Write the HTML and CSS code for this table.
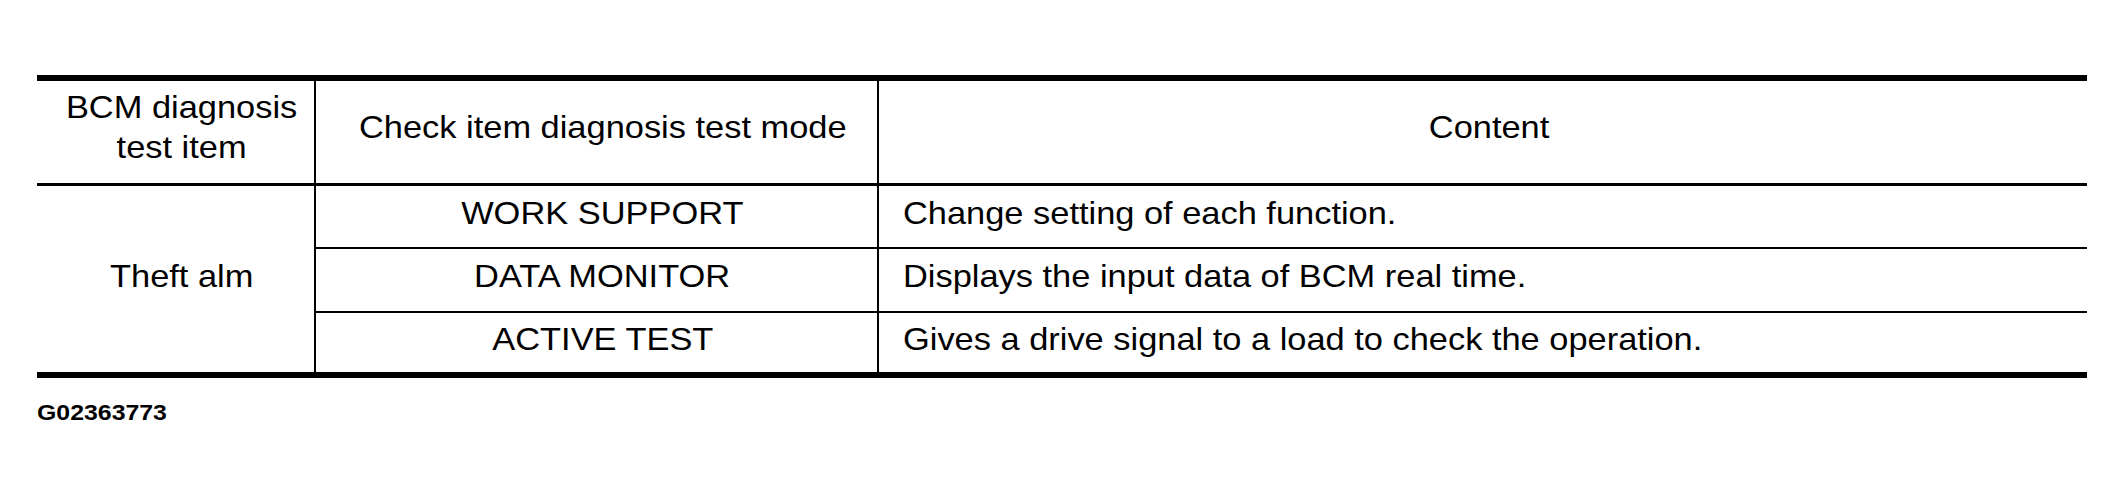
FILE: index.html
```html
<!DOCTYPE html>
<html lang="en">
<head>
<meta charset="utf-8">
<title>BCM diagnosis test item</title>
<link rel="stylesheet" href="styles.css">
</head>
<body>
<div class="page">
  <table class="diag">
    <colgroup>
      <col class="c1">
      <col class="c2">
      <col class="c3">
    </colgroup>
    <thead>
      <tr class="head">
        <th><span class="t">BCM diagnosis<br>test item</span></th>
        <th class="div"><span class="t">Check item diagnosis test mode</span></th>
        <th class="div"><span class="t">Content</span></th>
      </tr>
    </thead>
    <tbody>
      <tr class="r1">
        <td class="item" rowspan="3"><span class="t">Theft alm</span></td>
        <td class="div mode line"><span class="t">WORK SUPPORT</span></td>
        <td class="div desc line"><span class="t tl">Change setting of each function.</span></td>
      </tr>
      <tr class="r2">
        <td class="div mode line"><span class="t">DATA MONITOR</span></td>
        <td class="div desc line"><span class="t tl">Displays the input data of BCM real time.</span></td>
      </tr>
      <tr class="r3">
        <td class="div mode"><span class="t">ACTIVE TEST</span></td>
        <td class="div desc"><span class="t tl">Gives a drive signal to a load to check the operation.</span></td>
      </tr>
    </tbody>
  </table>
  <div class="caption"><span class="t tl">G02363773</span></div>
</div>
</body>
</html>
```
FILE: styles.css
```css
html, body {
  margin: 0;
  padding: 0;
  background: #fff;
}
body {
  font-family: "Liberation Sans", Arial, sans-serif;
  color: #000;
}
.page {
  padding: 75px 0 0 37px;
}
.diag {
  width: 2050px;
  table-layout: fixed;
  border-collapse: separate;
  border-spacing: 0;
  border-top: 6px solid #000;
  border-bottom: 6px solid #000;
  font-size: 32px;
  line-height: 40px;
}
.c1 { width: 277px; }
.c2 { width: 563px; }
.c3 { width: 1210px; }
.diag th,
.diag td {
  box-sizing: border-box;
  padding: 0;
  font-weight: normal;
  text-align: center;
  vertical-align: middle;
}
.diag th {
  height: 105px;
  border-bottom: 3px solid #000;
  padding: 0 0 11px 12px;
}
.div {
  border-left: 2px solid #000;
}
.line {
  border-bottom: 2px solid #000;
}
.r1 td.mode, .r1 td.desc { height: 63px; }
.r2 td { height: 64px; }
.r3 td { height: 59px; }
.diag td.mode,
.diag td.desc {
  padding: 0 0 8px 12px;
}
.diag td.desc {
  text-align: left;
  padding-left: 24px;
}
.diag td.item {
  padding: 0 0 6px 12px;
}
.t {
  display: inline-block;
  transform: scaleX(1.075);
  transform-origin: center;
  white-space: nowrap;
}
.tl {
  transform-origin: left center;
}
.caption {
  margin-top: 23px;
  font-size: 22px;
  line-height: 24px;
  font-weight: bold;
}
.caption .t {
  transform: scaleX(1.13);
}
```
